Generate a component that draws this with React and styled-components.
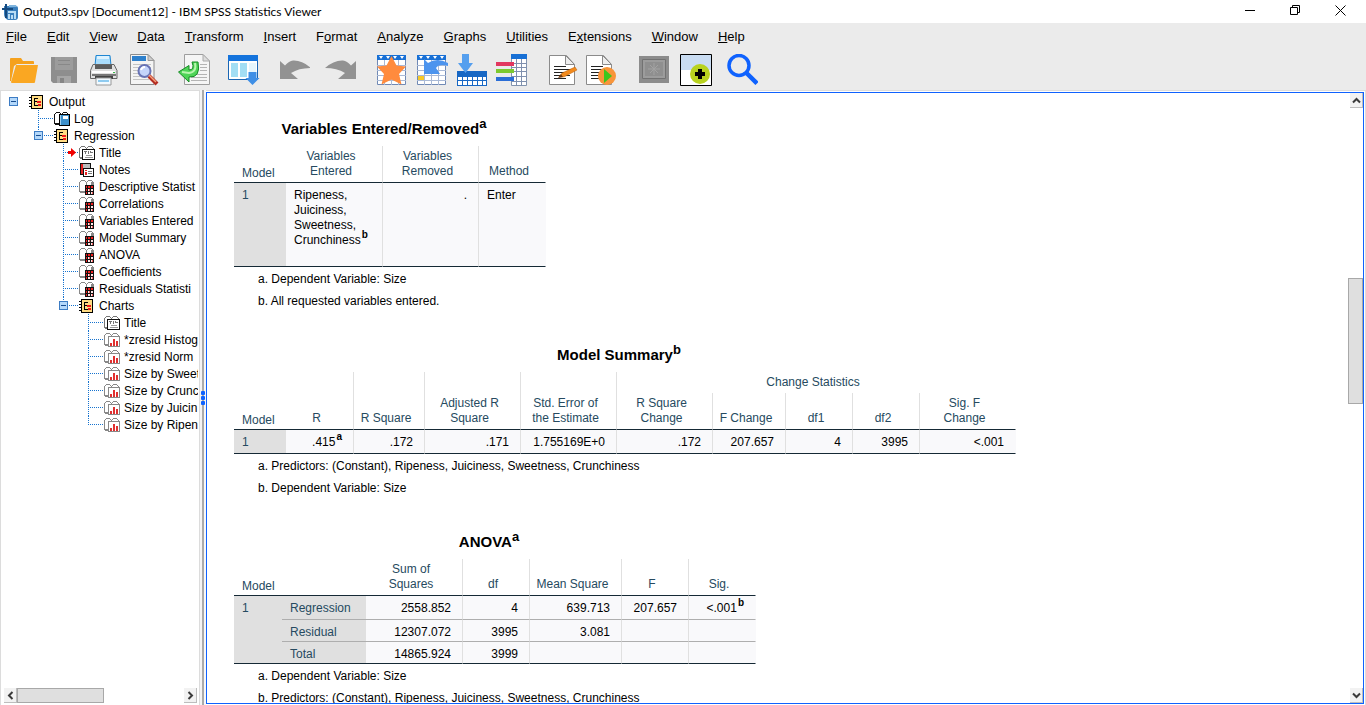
import React from "react";
import styled, { createGlobalStyle, css } from "styled-components";

const sans = `"Liberation Sans", Arial, sans-serif`;
const accent = "#0f62fe";
const label = "#264a60";
const rule = "#152935";

const GlobalStyle = createGlobalStyle`
  * { box-sizing: border-box; }
  body { margin: 0; background: #ebebeb; font-family: ${sans}; font-size: 13px; color: #000; }
  button { border: 0; padding: 0; background: none; font: inherit; color: inherit; }
  svg { display: block; flex: none; }
`;

const Shell = styled.div`
  display: flex;
  flex-direction: column;
  height: 100vh;
  overflow: hidden;
`;

/* ---------- title bar ---------- */

const TitleBar = styled.header`
  display: flex;
  align-items: center;
  gap: 5px;
  height: 23px;
  flex: none;
  padding: 0 3px 0 2px;
  background: #fff;
`;

const WindowTitle = styled.h1`
  flex: 1;
  margin: 0;
  font: 400 12px/23px Lato, "Noto Sans", sans-serif;
`;

const WindowButtons = styled.div`
  display: flex;
  height: 21px;
  align-self: flex-start;
`;

const WindowButton = styled.button`
  display: grid;
  place-items: center;
  width: 45px;
`;

/* ---------- menus and tools ---------- */

const MenuBar = styled.nav`
  display: flex;
  gap: 20px;
  flex: none;
  height: 27px;
  padding: 0 6px;
`;

const MenuItem = styled.button`
  line-height: 27px;
  white-space: nowrap;
`;

const ToolBar = styled.div`
  display: flex;
  flex: none;
  height: 40px;
  padding: 4px 8px;
`;

const ToolGroup = styled.div`
  display: flex;
  gap: ${(p) => p.$gap || 8}px;
  margin-right: ${(p) => p.$after || 18}px;
`;

const ToolButton = styled.button`
  width: 32px;
  height: 32px;
`;

/* ---------- outline pane ---------- */

const Workspace = styled.main`
  display: flex;
  flex: 1;
  min-height: 0;
`;

const OutlinePane = styled.aside`
  display: flex;
  flex-direction: column;
  width: 200px;
  flex: none;
  border: 1px solid #dcdcdc;
  border-bottom: 0;
  background: #fff;
`;

const TreeArea = styled.div`
  flex: 1;
  overflow: hidden;
  margin-right: 1px;
  padding: 2px 0 0 4px;
  font-size: 12px;
`;

const dotsDown = `repeating-linear-gradient(to bottom, #1673cf 0 1px, transparent 1px 2px)`;
const dotsAcross = `repeating-linear-gradient(to right, #1673cf 0 1px, transparent 1px 2px)`;

const TreeList = styled.ul`
  list-style: none;
  margin: 0;
  padding: 0 0 0 ${(p) => (p.$root ? 0 : 25)}px;
`;

const TreeItem = styled.li`
  ${(p) =>
    !p.$root &&
    css`
      background: ${dotsDown} 8px 0 / 1px ${p.$last ? "9px" : "100%"} no-repeat;
    `}
`;

const TreeRow = styled.div`
  display: flex;
  align-items: center;
  height: 17px;
  white-space: nowrap;
`;

const Branch = styled.span`
  display: flex;
  align-items: center;
  flex: none;
  width: 24px;
  height: 17px;
  padding-left: 4px;
  ${(p) =>
    !p.$root &&
    css`
      background: ${dotsAcross} 8px 8px / 15px 1px no-repeat;
    `}
`;

const Toggle = styled.button`
  width: 9px;
  height: 9px;
`;

const TreeLabel = styled.span`
  margin-left: 3px;
  padding-top: 1px;
  line-height: 16px;
`;

/* ---------- scroll bars ---------- */

const ScrollRow = styled.div`
  display: flex;
  flex: none;
  height: 17px;
  margin: 0 2px 0 3px;
  padding-bottom: 2px;
`;

const ScrollColumn = styled.div`
  display: flex;
  flex-direction: column;
  align-items: flex-end;
  flex: none;
  width: 15px;
`;

const ScrollButton = styled.button`
  display: grid;
  place-items: center;
  flex: none;
  width: 13px;
  height: 15px;
  background: #f2f2f2;
  border: solid #bdbdbd;
  border-width: 0 1px 1px 0;
`;

const ScrollThumb = styled.div`
  flex: 0 0 ${(p) => p.$size};
  align-self: stretch;
  background: #dfdfdf;
  border: 1px solid #a8a8a8;
`;

const ScrollGap = styled.div`
  flex: ${(p) => p.$grow} 1 0;
`;

/* ---------- splitter ---------- */

const Splitter = styled.div`
  display: flex;
  flex-direction: column;
  align-items: center;
  justify-content: center;
  gap: 1px;
  flex: none;
  width: 6px;
  background: linear-gradient(to right, #f4f4f4 0 2px, #ababab 2px 4px, #f8f8f8 4px);
`;

const Dot = styled.i`
  width: 4px;
  height: 4px;
  border-radius: 1px;
  background: ${accent};
`;

/* ---------- output pane ---------- */

const OutputFrame = styled.div`
  display: flex;
  flex: 1;
  min-width: 0;
  padding: 1px 1px 1px 0;
  background: #fff;
  border: solid #dcdcdc;
  border-width: 1px 1px 0 0;
`;

const OutputPane = styled.section`
  display: flex;
  flex: 1;
  min-width: 0;
  border: 1px solid ${accent};
  background: #fff;
`;

const Sheet = styled.div`
  flex: 1;
  overflow: hidden;
  padding: 23px 0 0 27px;
`;

const Block = styled.article`
  width: max-content;
  margin-bottom: 30px;
`;

const Grid = styled.table`
  width: ${(p) => p.$width}px;
  table-layout: fixed;
  border-collapse: separate;
  border-spacing: 0;
  line-height: 15px;
  font-size: 12px;

  thead tr:last-child th, thead th[rowspan] { border-bottom: 1px solid ${rule}; }
  tbody tr:last-child > *, tbody th[rowspan] { border-bottom: 1px solid ${rule}; }
`;

const Caption = styled.caption`
  height: 30px;
  padding: 0 12px 4px 0;
  font-size: 15px;
  font-weight: 700;
  line-height: 26px;
  white-space: nowrap;
`;

const Mark = styled.sup`
  margin-left: ${(p) => (p.$big ? 0 : 1)}px;
  font-size: ${(p) => (p.$big ? 13 : 10)}px;
  line-height: 0;
  font-weight: 700;
  vertical-align: 6px;
`;

const Head = styled.th`
  padding: 3px 6px 3px 0;
  border-right: 1px solid ${(p) => (p.$open ? "transparent" : "#e0e0e0")};
  color: ${label};
  font-weight: 400;
  vertical-align: bottom;
  white-space: pre-line;
  ${(p) => p.$corner && css`
    padding: 0 0 1px 8px;
    text-align: left;
    border-right: 0;
  `}
`;

const Stub = styled.th`
  padding: 5px 8px 1px;
  background: #e0e0e0;
  color: ${label};
  font-weight: 400;
  text-align: left;
  vertical-align: top;
  ${(p) => p.$ruled && css`border-bottom: 1px solid #aeaeae;`}
`;

const Cell = styled.td`
  height: ${(p) => p.$height || 22}px;
  padding: 5px 11px 1px 8px;
  background: #f9f9fb;
  border-right: 1px solid ${(p) => (p.$open ? "transparent" : "#e0e0e0")};
  text-align: ${(p) => (p.$left ? "left" : "right")};
  vertical-align: top;
  white-space: pre-line;
  ${(p) => p.$ruled && css`border-bottom: 1px solid #aeaeae;`}
`;

const Notes = styled.div`
  padding: 1px 0 0 24px;
  font-size: 12px;
`;

const Note = styled.p`
  margin: 0;
  line-height: 22px;
`;

/* ---------- tool icons ---------- */

const Icon = ({ children, ...rest }) => (
  <svg width="32" height="32" viewBox="0 0 32 32" aria-hidden="true" {...rest}>
    {children}
  </svg>
);

const OpenIcon = () => (
  <Icon>
    <path d="M2 5q0-1 1-1h10l2 3h10q1 0 1 1v2H9L6 12 3 27H2z" fill="#f5a11d" />
    <path d="M8 11h22l-3 17q0 1-1 1H4q-1 0-1-1z" fill="#faa722" />
  </Icon>
);

const SaveIcon = () => (
  <Icon>
    <path d="M3 3h26v26H5l-2-2z" fill="#8e8e8e" />
    <path d="M7 3h18v13H7z" fill="#9c9c9c" />
    <path d="M10 6h12v1H10zM10 10h12v1H10z" fill="#888" />
    <path d="M9 22h14v7H9z" fill="#a6a6a6" />
    <path d="M12 24h4v5h-4z" fill="#858585" />
  </Icon>
);

const PrintIcon = () => (
  <Icon>
    <path d="M8 1.500h14l1 10H7z" fill="#a9dcfb" stroke="#1f86d2" />
    <path d="M9 2h12v3H9z" fill="#dcf2ff" />
    <path d="M5 10.500h21l3 6v8H2.500v-8z" fill="#e0e0e0" stroke="#666" />
    <path d="M7 11h17v4H7z" fill="#5b5b5b" />
    <path d="M4 17h23v2H4z" fill="#fff" />
    <path d="M4 20h24v2H4z" fill="#777" />
    <path d="M7 22h18v3H7z" fill="#444" />
    <path d="M8 24h15v7H8z" fill="#f2faff" stroke="#999" />
    <path d="M10 26h11v2H10z" fill="#8ecbf0" />
    <path d="M25 18h2v1h-2z" fill="#3ab54a" />
  </Icon>
);

const PreviewIcon = () => (
  <Icon>
    <path d="M2.500 .5H20l6 6v24H2.500z" fill="#f4f4f4" stroke="#8d8d8d" />
    <path d="M20 .5v6h6z" fill="#ccc" stroke="#999" />
    <path d="M4 2h14v5H4z" fill="#2e80cc" />
    <path d="M5 10.500h18M5 13.500h18M5 16.500h18M5 19.500h18M5 22.500h14M5 25.500h16" stroke="#c4c4c4" />
    <circle cx="16.500" cy="17" r="6" fill="#c4d4fb" stroke="#6873b5" strokeWidth="2" />
    <path d="M13 16q1-3 4-3" stroke="#fff" strokeWidth="2" fill="none" />
    <path d="M21 22l8 8" stroke="#b32d22" strokeWidth="4" />
    <path d="M21 21l7 7" stroke="#f6a07a" strokeWidth="1.500" />
  </Icon>
);

const ExportIcon = () => (
  <Icon>
    <path d="M6.500 .5H25l6.500 6.500v23.500h-25z" fill="#f5f5f5" stroke="#9d9d9d" />
    <path d="M25 .5V7h6.500z" fill="#ddd" stroke="#aaa" />
    <path d="M22 10.500h7M22 13.500h7M22 16.500h7M16 20.500h13M13 23.500h16M13 26.500h16" stroke="#b4b4b4" />
    <path d="M14 8h6q3 16-9 15v5L.5 18 11 11.500V16q6 0 3-8z" fill="#4ed457" stroke="#168a25" />
    <path d="M17 9q2 9-6 10l-7-1" stroke="#b8f5ae" fill="none" strokeWidth="2" />
  </Icon>
);

const PivotIcon = () => (
  <Icon>
    <path d="M.5 1.500h29v24H.5z" fill="#fff" stroke="#1a66b4" />
    <path d="M0 1h30v6H0z" fill="#1473dc" />
    <path d="M3 9h7v14H3zM12 9h7v14h-7z" fill="#a2def4" />
    <path d="M21 9h7v14h-7z" fill="#e6f6fd" />
    <path d="M20.500 18h8v6h3l-7 7-7-7h3z" fill="#3f8fe6" />
  </Icon>
);

const bend = "M2 7v18h18l-7-6q8-5 20-5-9-8-18-7.500-4 .5-8 5z";

const UndoIcon = () => (
  <Icon>
    <path d={bend} fill="#929292" />
  </Icon>
);

const RedoIcon = () => (
  <Icon>
    <path d={bend} transform="matrix(-1 0 0 1 34 0)" fill="#929292" />
  </Icon>
);

const SheetGrid = () => (
  <>
    <path d="M1.500 1.500h28v29h-28z" fill="#fff" stroke="#7089b5" />
    <path d="M1 11.500h29M1 16.500h29M1 21.500h29M1 26.500h29M8.500 6v25M15.500 6v25M22.500 6v25" stroke="#a9b9d6" />
    <path d="M1 1h29v5H1z" fill="#1870d5" />
    <path d="M3 2h4l-2 3zM10 2h4l-2 3zM17 2h4l-2 3zM24 2h4l-2 3z" fill="#fff" />
  </>
);

const StarIcon = () => (
  <Icon>
    <SheetGrid />
    <path d="M15.500 2l5 9.500 9.500 1-7 7.500 2.500 10.500-10-5-10 5L8 20l-7-7.500 9.500-1z" fill="#ff8b3d" />
  </Icon>
);

const GoToIcon = () => (
  <Icon>
    <SheetGrid />
    <path d="M2 22h6v4H2z" fill="#f6c928" />
    <path d="M8 5l4 4q9-6 20 0v3q-9-3-12 2l4 6H8z" fill="#4c94ee" />
  </Icon>
);

const InsertCaseIcon = () => (
  <Icon>
    <path d="M1 17h30v15H1z" fill="#1767c4" />
    <path
      d="M2 23h4v3H2zM7 23h4v3H7zM12 23h4v3h-4zM17 23h4v3h-4zM22 23h4v3h-4zM27 23h3v3h-3zM2 27h4v4H2zM7 27h4v4H7zM12 27h4v4h-4zM17 27h4v4h-4zM22 27h4v4h-4zM27 27h3v4h-3z"
      fill="#fff"
    />
    <path d="M6 0h7v9h4l-7.500 10L2 9h4z" fill="#559fee" />
  </Icon>
);

const InsertVariableIcon = () => (
  <Icon>
    <path d="M15.500 .5h15v31h-15z" fill="#fff" stroke="#8293ad" />
    <path d="M15 9.500h16M15 13.500h16M15 17.500h16M15 22.500h16M15 27.500h16M20.500 5v27M25.500 5v27" stroke="#7f90ae" />
    <path d="M15 0h16v5H15z" fill="#1870d5" />
    <path d="M0 8h18v4H0z" fill="#e2375f" />
    <path d="M0 15h18v4H0z" fill="#7cc92f" />
    <path d="M0 23h18v4H0z" fill="#2a6dd6" />
  </Icon>
);

const PageBase = ({ x }) => (
  <g transform={`translate(${x} 0)`}>
    <path d="M.5 1.500h17l8 9v20H.5z" fill="#fff" stroke="#8b8b8b" />
    <path d="M16.500 1.500v9h9z" fill="#eee" stroke="#8b8b8b" />
    <path d="M5 12.500h12M5 15.500h17M5 18.500h15M5 21.500h16M5 24.500h12" stroke="#222" />
  </g>
);

const EditPageIcon = () => (
  <Icon>
    <PageBase x={3} />
    <path d="M13 23l3-4 13-6 2 3-13 7z" fill="#f28a1c" stroke="#b8600f" strokeWidth=".5" />
    <path d="M12 24l3-4 2 3z" fill="#733c12" />
  </Icon>
);

const RunPageIcon = () => (
  <Icon>
    <PageBase x={0} />
    <circle cx="21" cy="22" r="9" fill="#f8953a" />
    <path d="M18 15l8 7-8 7z" fill="#3bc61d" />
  </Icon>
);

const DesignateIcon = () => (
  <Icon>
    <path d="M1 2h30v27H1z" fill="#8c8c8c" />
    <path d="M4.500 5.500h23v19h-23z" fill="#9c9c9c" stroke="#727272" />
    <path d="M7 8h18v14H7z" fill="#8f8f8f" />
    <path d="M16 9v12M10 15h12M12 11l8 8M20 11l-8 8" stroke="#a2a2a2" />
  </Icon>
);

const AddPaneIcon = () => (
  <Icon>
    <path d="M.5 .5h31v31H.5z" fill="#fff" stroke="#000" />
    <path d="M1 1h30v15H1z" fill="#c9dcf2" />
    <circle cx="20" cy="20" r="10" fill="#b8d21f" />
    <path d="M18 15h4v3h3v4h-3v3h-4v-3h-3v-4h3z" fill="#000" />
  </Icon>
);

const SearchIcon = () => (
  <Icon>
    <circle cx="13" cy="11.500" r="10" fill="none" stroke={accent} strokeWidth="3.500" />
    <path d="M20 18.500l11 11" stroke={accent} strokeWidth="4.500" />
  </Icon>
);

/* ---------- outline icons ---------- */

const Small = ({ children }) => (
  <svg width="17" height="16" viewBox="0 0 17 16" aria-hidden="true" shapeRendering="crispEdges">
    {children}
  </svg>
);

const NotebookIcon = () => (
  <Small>
    <path d="M2.500 1.500h11v13h-11z" fill="#ffdc84" stroke="#000" />
    <path d="M0 3h3v1H0zM0 6h3v1H0zM0 9h3v1H0zM0 12h3v1H0z" fill="#000" />
    <path d="M5 4h4v1H6v2h2v1H6v3h3v1H5z" fill="#000" />
    <path d="M8 7h4v2H8zM9 10h3v2H9z" fill="#f01818" />
  </Small>
);

const OpenBook = ({ ink }) => (
  <>
    <path d="M.5 3.500l2-2h3l2 2 2-2h3l2 2v9H.5z" fill="#fff" stroke={ink} />
    <path d="M7 3h1v9H7zM1 12h6v2H1z" fill={ink} />
  </>
);

const LogIcon = () => (
  <Small>
    <OpenBook ink="#111" />
    <path d="M5.500 3.500h10v11h-10z" fill="#3b8fcb" stroke="#000" />
    <path d="M9 5h5v3H9z" fill="#fff" />
    <path d="M6 4h1v10H6z" fill="#9ccff0" />
  </Small>
);

const TitleIcon = () => (
  <Small>
    <OpenBook ink="#777" />
    <path d="M3.500 4.500h12v10h-12z" fill="#fff" stroke="#111" />
    <path d="M5 6h3v1H5zM6 7h1v2H6zM9 6h1v3H9zM11 7h3v1h-3zM11 6h1v2h-1z" fill="#777" />
    <path d="M7 10h6v1H7zM6 12h8v1H6z" fill="#999" />
  </Small>
);

const NotesIcon = () => (
  <Small>
    <path d="M1.500 1.500h10v11h-10z" fill="#bdbdbd" stroke="#111" />
    <path d="M2 2h2v10H2z" fill="#e82020" />
    <path d="M4.500 6.500h10v8h-10z" fill="#fff" stroke="#111" />
    <path d="M6 8h2v1H6zM6 10h2v3H6z" fill="#e82020" />
    <path d="M9 9h4v1H9zM9 11h4v1H9z" fill="#777" />
  </Small>
);

const TableIcon = () => (
  <Small>
    <OpenBook ink="#888" />
    <path d="M12 3h3v9h-3z" fill="#888" />
    <path d="M6 6h9v10H6z" fill="#111" />
    <path d="M7 7h1v2H7zM9 7h2v2H9zM12 7h2v2h-2zM7 10h1v2H7zM7 13h1v2H7z" fill="#f02020" />
    <path d="M9 10h2v2H9zM12 10h2v2h-2zM9 13h2v2H9zM12 13h2v2h-2z" fill="#ffe6e6" />
    <path d="M10 10h1v2h-1zM13 13h1v2h-1z" fill="#f46060" />
  </Small>
);

const ChartIcon = () => (
  <Small>
    <OpenBook ink="#888" />
    <path d="M4.500 4.500h11v10h-11z" fill="#fff" stroke="#888" />
    <path d="M6 11h2v3H6zM9 7h2v7H9zM12 9h2v5h-2z" fill="#e03030" />
  </Small>
);

const ArrowMark = () => (
  <svg width="8" height="9" viewBox="0 0 8 9" aria-hidden="true">
    <path d="M0 3h3V0l5 4.500L3 9V6H0z" fill="#f00000" />
  </svg>
);

const ArrowSlot = styled.span`
  margin-left: 9px;
`;

const MinusBox = () => (
  <svg width="9" height="9" viewBox="0 0 9 9" shapeRendering="crispEdges" aria-hidden="true">
    <path d="M.5 .5h8v8h-8z" fill="#b4d8fa" stroke="#3c7cc4" />
    <path d="M2 4h5v1H2z" fill="#164c90" />
  </svg>
);

const Chevron = ({ d }) => (
  <svg width="9" height="9" viewBox="0 0 9 9" aria-hidden="true">
    <path d={d} fill="none" stroke="#3a3a3a" strokeWidth="2" />
  </svg>
);

const AppIcon = () => (
  <svg width="16" height="16" viewBox="0 0 16 16" aria-hidden="true">
    <path d="M2 2h12q2 0 2 2v9q0 3-3 3H6q-4-2-4-6z" fill="#3a7fbd" />
    <path d="M3 0h2v4h6v2H5v8H3V6H0V4h3z" fill="#14497f" />
    <path d="M6 7h8v2H6zM6 10h2v5H6zM9 11h2v4H9zM12 9h2v6h-2z" fill="#b9dcf4" />
    <path d="M7 1h7l1 2H7z" fill="#7fb4dd" />
  </svg>
);

/* ---------- data ---------- */

const menus = [
  ["", "F", "ile"],
  ["", "E", "dit"],
  ["", "V", "iew"],
  ["", "D", "ata"],
  ["", "T", "ransform"],
  ["", "I", "nsert"],
  ["F", "o", "rmat"],
  ["", "A", "nalyze"],
  ["", "G", "raphs"],
  ["", "U", "tilities"],
  ["E", "x", "tensions"],
  ["", "W", "indow"],
  ["", "H", "elp"],
];

const toolGroups = [
  { tools: [["Open", OpenIcon], ["Save", SaveIcon], ["Print", PrintIcon], ["Print preview", PreviewIcon]] },
  { tools: [["Export", ExportIcon]] },
  { tools: [["Recall dialogs", PivotIcon]] },
  { gap: 14, after: 20, tools: [["Undo", UndoIcon], ["Redo", RedoIcon]] },
  {
    tools: [
      ["Go to data", StarIcon],
      ["Go to case", GoToIcon],
      ["Insert cases", InsertCaseIcon],
      ["Insert variable", InsertVariableIcon],
    ],
  },
  { after: 20, tools: [["Edit output", EditPageIcon], ["Run", RunPageIcon]] },
  { gap: 10, after: 14, tools: [["Designate window", DesignateIcon], ["Add", AddPaneIcon]] },
  { tools: [["Search", SearchIcon]] },
];

const outline = {
  name: "Output",
  icon: NotebookIcon,
  children: [
    { name: "Log", icon: LogIcon },
    {
      name: "Regression",
      icon: NotebookIcon,
      children: [
        { name: "Title", icon: TitleIcon, current: true },
        { name: "Notes", icon: NotesIcon },
        { name: "Descriptive Statist", icon: TableIcon },
        { name: "Correlations", icon: TableIcon },
        { name: "Variables Entered", icon: TableIcon },
        { name: "Model Summary", icon: TableIcon },
        { name: "ANOVA", icon: TableIcon },
        { name: "Coefficients", icon: TableIcon },
        { name: "Residuals Statisti", icon: TableIcon },
        {
          name: "Charts",
          icon: NotebookIcon,
          children: [
            { name: "Title", icon: TitleIcon },
            { name: "*zresid Histog", icon: ChartIcon },
            { name: "*zresid Norm", icon: ChartIcon },
            { name: "Size by Sweet", icon: ChartIcon },
            { name: "Size by Crunc", icon: ChartIcon },
            { name: "Size by Juicin", icon: ChartIcon },
            { name: "Size by Ripen", icon: ChartIcon },
          ],
        },
      ],
    },
  ],
};

function Node({ node, root, last }) {
  const NodeIcon = node.icon;
  return (
    <TreeItem $root={root} $last={last}>
      <TreeRow>
        <Branch $root={root}>
          {node.children && (
            <Toggle aria-label={`Collapse ${node.name}`}>
              <MinusBox />
            </Toggle>
          )}
          {node.current && (
            <ArrowSlot>
              <ArrowMark />
            </ArrowSlot>
          )}
        </Branch>
        <NodeIcon />
        <TreeLabel>{node.name}</TreeLabel>
      </TreeRow>
      {node.children && (
        <TreeList>
          {node.children.map((child, i) => (
            <Node key={child.name} node={child} last={i === node.children.length - 1} />
          ))}
        </TreeList>
      )}
    </TreeItem>
  );
}

const Columns = ({ widths }) => (
  <colgroup>
    {widths.map((w, i) => (
      <col key={i} width={w} />
    ))}
  </colgroup>
);

const VariablesTable = () => (
  <Block>
    <Grid $width={312}>
      <Caption>
        Variables Entered/Removed<Mark $big>a</Mark>
      </Caption>
      <Columns widths={[52, 97, 96, 67]} />
      <thead>
        <tr>
          <Head $corner>Model</Head>
          <Head>{"Variables\nEntered"}</Head>
          <Head>{"Variables\nRemoved"}</Head>
          <Head $open>Method</Head>
        </tr>
      </thead>
      <tbody>
        <tr>
          <Stub scope="row">1</Stub>
          <Cell $left $height={84}>
            {"Ripeness,\nJuiciness,\nSweetness,\nCrunchiness"}
            <Mark>b</Mark>
          </Cell>
          <Cell>.</Cell>
          <Cell $left $open>Enter</Cell>
        </tr>
      </tbody>
    </Grid>
    <Notes>
      <Note>a. Dependent Variable: Size</Note>
      <Note>b. All requested variables entered.</Note>
    </Notes>
  </Block>
);

const SummaryTable = () => (
  <Block>
    <Grid $width={782}>
      <Caption>
        Model Summary<Mark $big>b</Mark>
      </Caption>
      <Columns widths={[52, 68, 71, 96, 96, 96, 73, 67, 67, 96]} />
      <thead>
        <tr>
          <Head $corner rowSpan={2}>Model</Head>
          <Head rowSpan={2}>R</Head>
          <Head rowSpan={2}>R Square</Head>
          <Head rowSpan={2}>{"Adjusted R\nSquare"}</Head>
          <Head rowSpan={2}>{"Std. Error of\nthe Estimate"}</Head>
          <Head colSpan={5} $open>Change Statistics</Head>
        </tr>
        <tr>
          <Head>{"R Square\nChange"}</Head>
          <Head>F Change</Head>
          <Head>df1</Head>
          <Head>df2</Head>
          <Head $open>{"Sig. F\nChange"}</Head>
        </tr>
      </thead>
      <tbody>
        <tr>
          <Stub scope="row">1</Stub>
          <Cell $height={24}>
            .415<Mark>a</Mark>
          </Cell>
          <Cell>.172</Cell>
          <Cell>.171</Cell>
          <Cell>1.755169E+0</Cell>
          <Cell>.172</Cell>
          <Cell>207.657</Cell>
          <Cell>4</Cell>
          <Cell>3995</Cell>
          <Cell $open>&lt;.001</Cell>
        </tr>
      </tbody>
    </Grid>
    <Notes>
      <Note>a. Predictors: (Constant), Ripeness, Juiciness, Sweetness, Crunchiness</Note>
      <Note>b. Dependent Variable: Size</Note>
    </Notes>
  </Block>
);

const AnovaTable = () => (
  <Block>
    <Grid $width={522}>
      <Caption>
        ANOVA<Mark $big>a</Mark>
      </Caption>
      <Columns widths={[48, 84, 97, 67, 92, 67, 67]} />
      <thead>
        <tr>
          <Head $corner colSpan={2}>Model</Head>
          <Head>{"Sum of\nSquares"}</Head>
          <Head>df</Head>
          <Head>Mean Square</Head>
          <Head>F</Head>
          <Head $open>Sig.</Head>
        </tr>
      </thead>
      <tbody>
        <tr>
          <Stub scope="rowgroup" rowSpan={3}>1</Stub>
          <Stub scope="row" $ruled>Regression</Stub>
          <Cell $ruled $height={24}>2558.852</Cell>
          <Cell $ruled>4</Cell>
          <Cell $ruled>639.713</Cell>
          <Cell $ruled>207.657</Cell>
          <Cell $ruled $open>
            &lt;.001<Mark>b</Mark>
          </Cell>
        </tr>
        <tr>
          <Stub scope="row" $ruled>Residual</Stub>
          <Cell $ruled>12307.072</Cell>
          <Cell $ruled>3995</Cell>
          <Cell $ruled>3.081</Cell>
          <Cell $ruled />
          <Cell $ruled $open />
        </tr>
        <tr>
          <Stub scope="row">Total</Stub>
          <Cell>14865.924</Cell>
          <Cell>3999</Cell>
          <Cell />
          <Cell />
          <Cell $open />
        </tr>
      </tbody>
    </Grid>
    <Notes>
      <Note>a. Dependent Variable: Size</Note>
      <Note>b. Predictors: (Constant), Ripeness, Juiciness, Sweetness, Crunchiness</Note>
    </Notes>
  </Block>
);

export default function App() {
  return (
    <Shell>
      <GlobalStyle />
      <TitleBar>
        <AppIcon />
        <WindowTitle>Output3.spv [Document12] - IBM SPSS Statistics Viewer</WindowTitle>
        <WindowButtons>
          <WindowButton aria-label="Minimize">
            <svg width="11" height="11" viewBox="0 0 11 11">
              <path d="M0 5.500h10" stroke="#000" />
            </svg>
          </WindowButton>
          <WindowButton aria-label="Restore">
            <svg width="11" height="11" viewBox="0 0 11 11">
              <path d="M.5 2.500h7v7h-7zM2.500 2.500v-2h7v7h-2" stroke="#000" fill="none" />
            </svg>
          </WindowButton>
          <WindowButton aria-label="Close">
            <svg width="11" height="11" viewBox="0 0 11 11">
              <path d="M.5 .5l10 10M10.500 .5l-10 10" stroke="#000" />
            </svg>
          </WindowButton>
        </WindowButtons>
      </TitleBar>
      <MenuBar>
        {menus.map(([pre, key, post]) => (
          <MenuItem key={pre + key + post}>
            {pre}
            <u>{key}</u>
            {post}
          </MenuItem>
        ))}
      </MenuBar>
      <ToolBar role="toolbar">
        {toolGroups.map((group, i) => (
          <ToolGroup key={i} $gap={group.gap} $after={group.after}>
            {group.tools.map(([name, ToolIcon]) => (
              <ToolButton key={name} aria-label={name}>
                <ToolIcon />
              </ToolButton>
            ))}
          </ToolGroup>
        ))}
      </ToolBar>
      <Workspace>
        <OutlinePane>
          <TreeArea>
            <TreeList $root>
              <Node node={outline} root />
            </TreeList>
          </TreeArea>
          <ScrollRow>
            <ScrollButton aria-label="Scroll left">
              <Chevron d="M6.500 1L3 4.500 6.500 8" />
            </ScrollButton>
            <ScrollThumb $size="87px" />
            <ScrollGap $grow={1} />
            <ScrollButton aria-label="Scroll right">
              <Chevron d="M2.500 1L6 4.500 2.500 8" />
            </ScrollButton>
          </ScrollRow>
        </OutlinePane>
        <Splitter>
          <Dot />
          <Dot />
          <Dot />
        </Splitter>
        <OutputFrame>
          <OutputPane>
            <Sheet>
              <VariablesTable />
              <SummaryTable />
              <AnovaTable />
            </Sheet>
            <ScrollColumn>
              <ScrollButton aria-label="Scroll up">
                <Chevron d="M1 6.500L4.500 3 8 6.500" />
              </ScrollButton>
              <ScrollGap $grow={37} />
              <ScrollThumb $size="126px" />
              <ScrollGap $grow={62} />
              <ScrollButton aria-label="Scroll down">
                <Chevron d="M1 2.500L4.500 6 8 2.500" />
              </ScrollButton>
            </ScrollColumn>
          </OutputPane>
        </OutputFrame>
      </Workspace>
    </Shell>
  );
}
